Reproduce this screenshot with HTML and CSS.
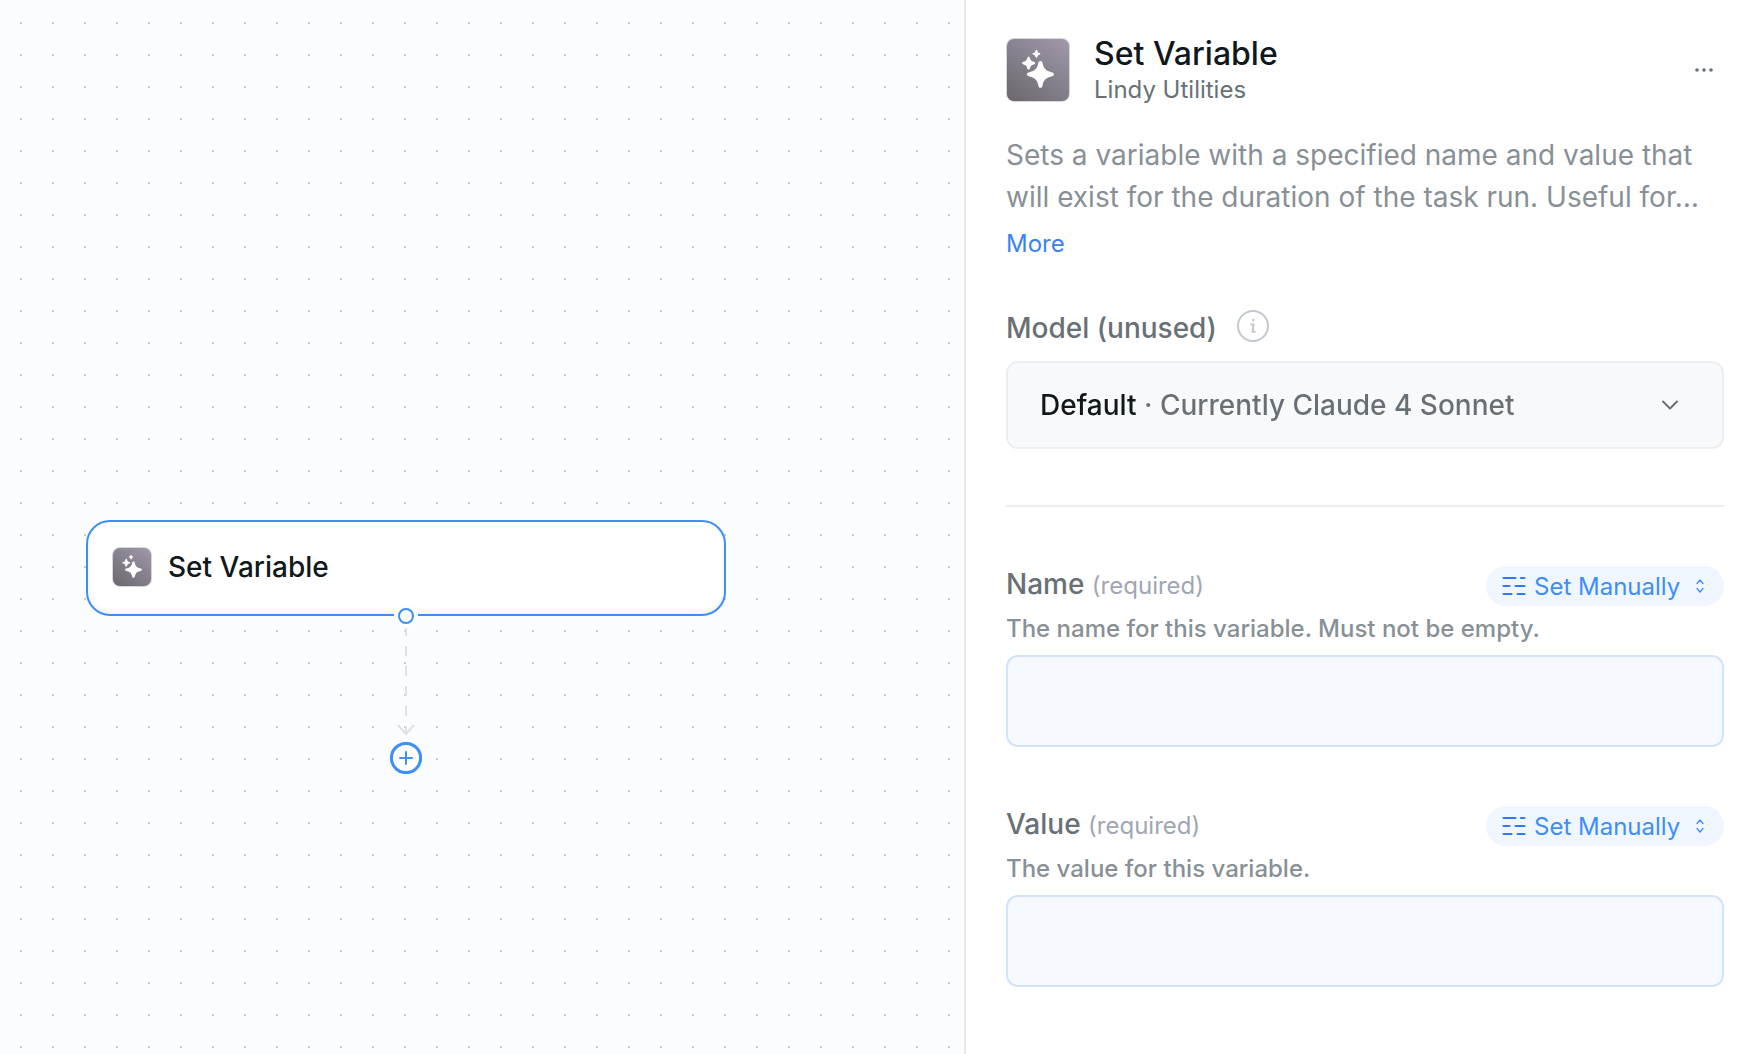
FILE: index.html
```html
<!DOCTYPE html>
<html lang="en">
<head>
<meta charset="utf-8">
<meta name="viewport" content="width=device-width, initial-scale=1">
<title>Set Variable</title>
<link rel="stylesheet" href="styles.css">
</head>
<body>
<svg class="sprite" aria-hidden="true">
  <symbol id="sparkles" viewBox="0 0 64 64">
    <path d="M34.500 22.800c1.200 0 1.900.9 2.200 2.300 1 5 3.300 8 9.100 9.100 1.900.4 2.700 1.200 2.700 2.300s-.8 1.900-2.700 2.300c-5.800 1.100-8.100 4.100-9.100 9.100-.3 1.500-1 2.400-2.200 2.400s-1.900-.9-2.200-2.400c-1-5-3.300-8-9.100-9.100-1.900-.4-2.700-1.200-2.700-2.300s.8-1.900 2.700-2.300c5.800-1.100 8.100-4.100 9.100-9.100.3-1.400 1-2.300 2.200-2.300z"/>
    <path d="M22.300 18.200c.8 0 1.200.5 1.400 1.400.5 2.200 1.500 3.400 3.800 3.900 1.100.2 1.600.7 1.600 1.400s-.5 1.200-1.600 1.400c-2.300.5-3.300 1.700-3.800 3.900-.2.900-.6 1.400-1.400 1.400s-1.200-.5-1.400-1.400c-.5-2.200-1.500-3.400-3.800-3.900-1.100-.2-1.600-.7-1.600-1.400s.5-1.200 1.600-1.400c2.300-.5 3.300-1.700 3.800-3.900.2-.9.600-1.400 1.400-1.400z"/>
    <path d="M30.400 11.200c.5 0 .8.300.9.900.3 1.300.9 2 2.200 2.300.7.100.9.500.9.900s-.2.800-.9.900c-1.300.3-1.900 1-2.200 2.300-.1.500-.4.900-.9.900s-.8-.4-.9-.9c-.3-1.300-.9-2-2.200-2.300-.7-.1-.9-.5-.9-.9s.2-.8.9-.9c1.300-.3 1.900-1 2.200-2.300.1-.6.4-.9.900-.9z"/>
  </symbol>
  <symbol id="sliders" viewBox="0 0 24 20">
    <path d="M1.500 2h12M19 2h3.500M1.500 10h6M13.500 10h9M1.500 18h8M15.500 18h7"/>
  </symbol>
  <symbol id="updown" viewBox="0 0 8 14">
    <path d="M1 4.500l3-3.500 3 3.500M1 9.500l3 3.500 3-3.500"/>
  </symbol>
</svg>

<div class="app">
  <main class="canvas">
    <div class="flow">
      <button class="node" type="button">
        <span class="tile tile-small"><svg viewBox="0 0 64 64"><use href="#sparkles"/></svg></span>
        <span>Set Variable</span>
      </button>
      <span class="handle"></span>
      <svg class="edge" viewBox="0 0 24 108" aria-hidden="true">
        <path d="M12 0v8M12 18v10M12 38v10M12 58v10M12 78v10M12 98v8"/>
        <path d="M4 97l8 9 8-9"/>
      </svg>
      <button class="add" type="button" aria-label="Add step">
        <svg viewBox="0 0 32 32"><circle cx="16" cy="16" r="14.600"/><path d="M16 10v12M10 16h12"/></svg>
      </button>
    </div>
  </main>

  <aside class="panel">
    <header class="panel-head">
      <span class="tile"><svg viewBox="0 0 64 64"><use href="#sparkles"/></svg></span>
      <div class="titles">
        <h1>Set Variable</h1>
        <p>Lindy Utilities</p>
      </div>
      <button class="menu" type="button" aria-label="More actions">
        <svg viewBox="0 0 20 6"><circle cx="3" cy="3" r="1.800"/><circle cx="10" cy="3" r="1.800"/><circle cx="17" cy="3" r="1.800"/></svg>
      </button>
    </header>

    <p class="description">Sets a variable with a specified name and value that will exist for the duration of the task run. Useful for…</p>
    <a class="more" href="#">More</a>

    <section class="model">
      <div class="label-row">
        <label for="model">Model (unused)</label>
        <svg class="info" viewBox="0 0 32 32" role="img" aria-label="Info"><circle cx="16" cy="16" r="15"/><circle class="dot" cx="16.300" cy="10" r="1.300"/><path d="M14.300 14.500h2.200l-1 7.300h2.200"/></svg>
      </div>
      <div class="select-box">
        <select id="model"><option>Default · Currently Claude 4 Sonnet</option></select>
        <svg class="chevron" viewBox="0 0 18 10" aria-hidden="true"><path d="M2 1.500l7 7 7-7"/></svg>
      </div>
    </section>

    <hr>

    <section class="field">
      <div class="field-head">
        <label for="name">Name <small>(required)</small></label>
        <div class="mode">
          <svg class="sliders" aria-hidden="true"><use href="#sliders"/></svg>
          <select aria-label="Name input mode"><option>Set Manually</option></select>
          <svg class="updown" aria-hidden="true"><use href="#updown"/></svg>
        </div>
      </div>
      <p class="hint">The name for this variable. Must not be empty.</p>
      <input id="name" type="text">
    </section>

    <section class="field">
      <div class="field-head">
        <label for="value">Value <small>(required)</small></label>
        <div class="mode">
          <svg class="sliders" aria-hidden="true"><use href="#sliders"/></svg>
          <select aria-label="Value input mode"><option>Set Manually</option></select>
          <svg class="updown" aria-hidden="true"><use href="#updown"/></svg>
        </div>
      </div>
      <p class="hint">The value for this variable.</p>
      <input id="value" type="text">
    </section>
  </aside>
</div>
</body>
</html>
```

FILE: styles.css
```css
:root {
  --ink: #11181c;
  --slate: #687076;
  --muted: #889096;
  --blue: #3e8ef7;
  --link: #3b82f0;
}

* { box-sizing: border-box; }

body {
  margin: 0;
  font-family: Inter, "Liberation Sans", sans-serif;
  font-optical-sizing: none;
  font-size: 28px;
  color: var(--ink);
  background: #fff;
}

h1, p { margin: 0; }
button, select, input { font: inherit; }
button { padding: 0; border: 0; background: none; color: inherit; cursor: pointer; }
svg { display: block; }
.sprite { position: absolute; width: 0; height: 0; }

.app {
  display: grid;
  grid-template-columns: minmax(0, 1fr) 780px;
  min-height: 100vh;
}

/* Canvas */
.canvas {
  position: relative;
  overflow: hidden;
  background-color: #fbfcfe;
  background-image:
    linear-gradient(to right, transparent 2px, #fbfcfe 2px),
    linear-gradient(#c9cbce 2px, transparent 2px);
  background-size: 32px 32px;
  background-position: 20px 22px;
}

.flow {
  position: absolute;
  left: 86px;
  top: 520px;
  width: 640px;
  display: flex;
  flex-direction: column;
  align-items: center;
}

.node {
  width: 100%;
  height: 96px;
  display: flex;
  align-items: center;
  gap: 16px;
  padding: 0 24px 2px;
  border: 2px solid var(--blue);
  border-radius: 24px;
  background: #fff;
  box-shadow: inset 0 -2px 4px rgba(0, 0, 0, .06);
  font-weight: 500;
}

.handle {
  width: 16px;
  height: 16px;
  margin-top: -8px;
  border: 2px solid var(--blue);
  border-radius: 50%;
  background: #fff;
  box-shadow: 0 0 0 4px #fcfdfe;
}

.edge {
  width: 24px;
  height: 108px;
  margin-top: 4px;
  fill: none;
  stroke: #dfe1e4;
  stroke-width: 2;
}

.add { margin-top: 6px; }
.add svg { width: 32px; height: 32px; fill: #fff; stroke: var(--blue); stroke-width: 3; stroke-linecap: round; }
.add path { stroke-width: 2; }

.tile {
  flex: none;
  width: 64px;
  height: 64px;
  border: 1px solid #d5d7dc;
  border-radius: 8px;
  background: linear-gradient(35deg, #6b676b, #85808c 50%, #a298ab);
}
.tile svg { width: 100%; height: 100%; fill: #fff; }
.tile-small { width: 40px; height: 40px; }

/* Settings panel */
.panel {
  padding: 32px 20px 32px 40px;
  border-left: 2px solid #e6e8eb;
  background: #fff;
}

.panel-head { display: flex; align-items: center; gap: 24px; height: 76px; }
.titles { flex: 1; }
.titles h1 { font-size: 32px; line-height: 40px; font-weight: 500; }
.titles p { font-size: 24px; line-height: 32px; color: var(--slate); }

.menu { padding: 8px; margin-right: 2px; }
.menu svg { width: 20px; height: 6px; fill: var(--slate); }

.description { margin-top: 26px; line-height: 42px; color: var(--muted); }
.more { display: block; width: fit-content; margin-top: 10px; font-size: 24px; line-height: 32px; color: var(--link); text-decoration: none; }

.model { margin-top: 50px; }
.label-row { display: flex; align-items: flex-start; gap: 20px; }
.label-row label { line-height: 36px; font-weight: 500; color: var(--slate); }
.info { width: 32px; height: 32px; fill: none; stroke: #c1c8cd; stroke-width: 2; stroke-linecap: round; stroke-linejoin: round; }
.info .dot { fill: #c1c8cd; stroke: none; }

.select-box {
  display: grid;
  align-items: center;
  height: 88px;
  margin-top: 15px;
  border: 2px solid #eceef0;
  border-radius: 12px;
  background: #f8f9fb;
}
.select-box > * { grid-area: 1 / 1; }
.select-box select {
  width: 100%;
  height: 100%;
  padding: 0 64px 0 32px;
  border: 0;
  appearance: none;
  font-weight: 500;
  /* the model source is drawn dark, its resolved name in grey */
  color: transparent;
  background: linear-gradient(to right, var(--ink) 132px, var(--slate) 132px);
  background-clip: text;
}
.chevron { justify-self: end; width: 18px; height: 10px; margin-right: 43px; pointer-events: none; fill: none; stroke: var(--slate); stroke-width: 2; stroke-linecap: round; stroke-linejoin: round; }

hr { margin: 56px 0 59px; border: 0; border-top: 2px solid #eceef0; }

.field + .field { margin-top: 59px; }
.field-head { display: flex; align-items: flex-start; justify-content: space-between; height: 40px; }
.field-head label { font-weight: 500; line-height: 36px; color: var(--slate); }
.field-head small { font-size: 24px; font-weight: 400; color: #a0a6b4; }

.mode {
  display: flex;
  align-items: center;
  height: 40px;
  padding: 0 20px 0 16px;
  border-radius: 20px;
  background: #eff6ff;
}
.mode svg { fill: none; stroke: #2f7bf5; stroke-width: 2; stroke-linecap: round; stroke-linejoin: round; }
.mode select {
  padding: 0 15px 0 8px;
  border: 0;
  appearance: none;
  background: none;
  font-size: 24px;
  color: var(--blue);
}
.mode .sliders { width: 24px; height: 20px; }
.mode .updown { width: 8px; height: 14px; stroke: var(--blue); stroke-width: 1.300; }

.hint { margin-top: 7px; font-size: 24px; line-height: 32px; font-weight: 500; color: var(--muted); }
.field input {
  display: block;
  width: 100%;
  height: 92px;
  margin-top: 10px;
  padding: 0 32px;
  border: 2px solid #d0e4fb;
  border-radius: 12px;
  background: #f6f9fe;
  color: var(--ink);
}
```
